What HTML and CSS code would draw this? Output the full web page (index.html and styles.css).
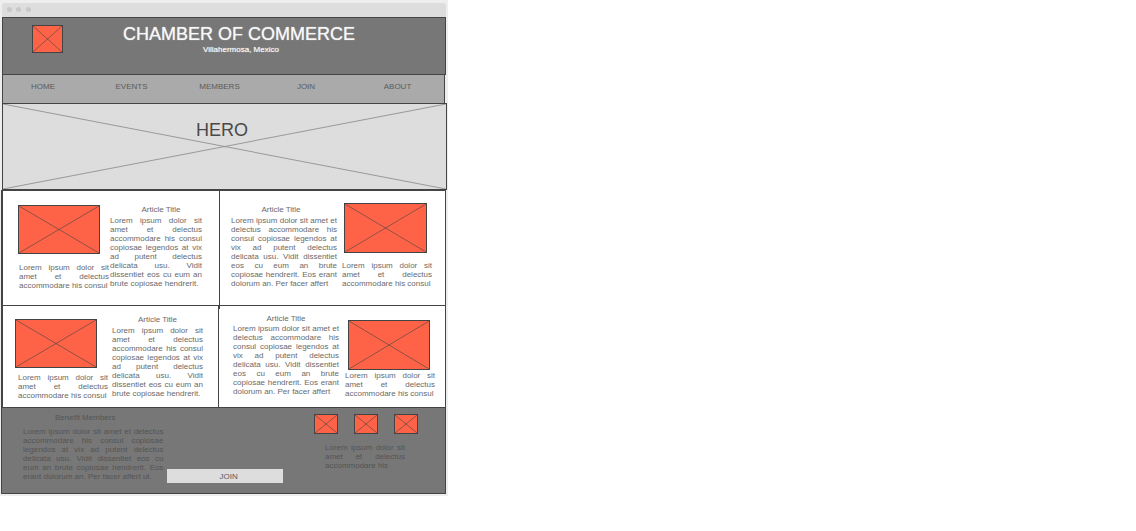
FILE: index.html
```html
<!DOCTYPE html>
<html lang="en">
<head>
<meta charset="utf-8">
<title>Chamber of Commerce</title>
<link rel="stylesheet" href="styles.css">
</head>
<body>
<svg class="defs" aria-hidden="true">
  <symbol id="cross" viewBox="0 0 100 100" preserveAspectRatio="none">
    <path d="M0 0L100 100M0 100L100 0" vector-effect="non-scaling-stroke"/>
  </symbol>
</svg>
<div class="browser">
  <div class="chrome"><span class="dot"></span><span class="dot"></span><span class="dot"></span></div>

  <header class="header">
    <svg class="thumb thumb-logo"><use href="#cross"/></svg>
    <div class="brand">
      <h1 class="brand-name">CHAMBER OF COMMERCE</h1>
      <p class="brand-place">Villahermosa, Mexico</p>
    </div>
  </header>

  <nav class="nav">
    <a href="#home">HOME</a>
    <a href="#events">EVENTS</a>
    <a href="#members">MEMBERS</a>
    <a href="#join">JOIN</a>
    <a href="#about">ABOUT</a>
  </nav>

  <section class="hero">
    <svg class="hero-cross"><use href="#cross"/></svg>
    <h2 class="hero-title">HERO</h2>
  </section>

  <main class="articles">
    <div class="row row-first">
      <article class="article article-a">
        <figure class="figure">
          <svg class="thumb"><use href="#cross"/></svg>
          <figcaption>Lorem ipsum dolor sit amet et delectus accommodare his consul</figcaption>
        </figure>
        <div class="copy">
          <h3>Article Title</h3>
          <p>Lorem ipsum dolor sit amet et delectus accommodare his consul copiosae legendos at vix ad putent delectus delicata usu. Vidit dissentiet eos cu eum an brute copiosae hendrerit.</p>
        </div>
      </article>
      <article class="article article-b">
        <div class="copy">
          <h3>Article Title</h3>
          <p>Lorem ipsum dolor sit amet et delectus accommodare his consul copiosae legendos at vix ad putent delectus delicata usu. Vidit dissentiet eos cu eum an brute copiosae hendrerit. Eos erant dolorum an. Per facer affert</p>
        </div>
        <figure class="figure">
          <svg class="thumb thumb-tall"><use href="#cross"/></svg>
          <figcaption>Lorem ipsum dolor sit amet et delectus accommodare his consul</figcaption>
        </figure>
      </article>
    </div>
    <div class="row row-second">
      <article class="article article-c">
        <figure class="figure">
          <svg class="thumb"><use href="#cross"/></svg>
          <figcaption>Lorem ipsum dolor sit amet et delectus accommodare his consul</figcaption>
        </figure>
        <div class="copy">
          <h3>Article Title</h3>
          <p>Lorem ipsum dolor sit amet et delectus accommodare his consul copiosae legendos at vix ad putent delectus delicata usu. Vidit dissentiet eos cu eum an brute copiosae hendrerit.</p>
        </div>
      </article>
      <article class="article article-d">
        <div class="copy">
          <h3>Article Title</h3>
          <p>Lorem ipsum dolor sit amet et delectus accommodare his consul copiosae legendos at vix ad putent delectus delicata usu. Vidit dissentiet eos cu eum an brute copiosae hendrerit. Eos erant dolorum an. Per facer affert</p>
        </div>
        <figure class="figure">
          <svg class="thumb thumb-tall"><use href="#cross"/></svg>
          <figcaption>Lorem ipsum dolor sit amet et delectus accommodare his consul</figcaption>
        </figure>
      </article>
    </div>
  </main>

  <footer class="footer">
    <section class="benefits">
      <h3>Benefit Members</h3>
      <p>Lorem ipsum dolor sit amet et delectus accommodare his consul copiosae legendos at vix ad putent delectus delicata usu. Vidit dissentiet eos cu eum an brute copiosae hendrerit. Eos erant dolorum an. Per facer affert ut.</p>
    </section>
    <button class="join" type="button">JOIN</button>
    <section class="social">
      <div class="social-icons">
        <svg class="thumb thumb-small"><use href="#cross"/></svg>
        <svg class="thumb thumb-small"><use href="#cross"/></svg>
        <svg class="thumb thumb-small"><use href="#cross"/></svg>
      </div>
      <p>Lorem ipsum dolor sit amet et delectus accommodare his</p>
    </section>
  </footer>
</div>
</body>
</html>
```
FILE: styles.css
```css
* { box-sizing: border-box; }

body {
  margin: 0;
  background: #fff;
  color: #6a6a6a;
  font: 8px/9px "Liberation Sans", Arial, sans-serif;
}

h1, h2, h3, p, figure { margin: 0; font-weight: 400; }
h3 { font-size: 8px; line-height: 9px; text-align: center; }

.defs { position: absolute; width: 0; height: 0; }

.browser {
  width: 100%;
  max-width: 448px;
  padding: 3px 1px 2px;
  background: #eee;
}

.chrome {
  display: flex;
  gap: 4px;
  height: 14px;
  margin: 0 1px;
  padding: 4px 5px;
  background: #ddd;
  border-radius: 2px 2px 0 0;
}
.dot { width: 5px; height: 5px; border-radius: 50%; background: #c8c8c8; }
.dot:last-child { margin-left: 1px; }

/* Crossed placeholder boxes */
.thumb {
  display: block;
  width: 100%;
  height: 49px;
  border: 1px solid #444;
  background: #ff6347;
  fill: none;
  stroke: #444;
  stroke-opacity: .6;
}
.thumb-tall { height: 50px; }
.thumb-logo { flex: none; width: 31px; height: 28px; }
.thumb-small { flex: none; width: 24px; height: 20px; }

.header {
  display: flex;
  margin: 0 1px;
  padding: 7px 30px 20px 29px;
  border: 1px solid #444;
  background: #777;
  color: #f8f8f8;
}
.brand { flex: 1; text-align: center; text-shadow: 0 0 1px #ddd; }
.brand-name { margin-bottom: 2px; font-size: 18px; line-height: 18px; }
.brand-place { padding-left: 4px; }

.nav {
  display: grid;
  grid-template-columns: 80fr 97fr 79fr 94fr 89fr;
  margin: 0 2px 0 1px;
  padding: 7px 2px 12px 0;
  border: solid #444;
  border-width: 0 1px;
  background: #aaa;
  text-align: center;
}
.nav a { color: #5a5a5a; text-decoration: none; }

.hero {
  position: relative;
  margin-left: 1px;
  padding: 15px 5px 48px 0;
  border: 1px solid #444;
  background: #ddd;
  color: #4a4a4a;
  text-align: center;
}
.hero-cross {
  position: absolute;
  inset: 0;
  width: 100%;
  height: 100%;
  fill: none;
  stroke: #999;
}
.hero-title { position: relative; font-size: 18px; line-height: 22px; }

.articles {
  margin-right: 1px;
  border: solid #444;
  border-width: 1px 1px 0 2px;
  background: #fff;
}
.row { display: grid; }
.row-first { grid-template-columns: 217fr 225fr; border-bottom: 1px solid #444; }
.row-second { grid-template-columns: 216fr 226fr; }

.article { display: grid; align-items: start; }
.article-a, .article-c { border-right: 1px solid #444; }
.copy, figcaption, .footer p { text-align: justify; }
.copy h3 { margin-bottom: 2px; }

.article-a { position: relative; grid-template-columns: 92fr 92fr; padding: 14px 17px 15px 15px; }
.article-a .thumb { width: 82px; }
.article-a figcaption { margin: 9px 1px 0; }
.article-a h3 { padding-left: 10px; }

/* Divider running past the bottom of the first row */
.article-a::after {
  content: "";
  position: absolute;
  top: 100%;
  left: 100%;
  width: 1px;
  height: 4px;
  background: #444;
}

.article-b { grid-template-columns: 106fr 90fr; column-gap: 5px; padding: 12px 13px 15px 11px; }
.article-b .copy { padding-top: 2px; }
.article-b .thumb { width: 83px; margin-left: 2px; }
.article-b figcaption { margin-top: 8px; }
.article-b h3 { padding-right: 6px; }

.article-c { grid-template-columns: 93fr 91fr; column-gap: 4px; padding: 9px 15px 7px 12px; }
.article-c .figure { padding-top: 4px; }
.article-c .thumb { width: 82px; }
.article-c figcaption { margin: 5px 0 0 3px; }

.article-d { grid-template-columns: 106fr 90fr; column-gap: 6px; padding: 8px 10px 7px 14px; }
.article-d h3 { margin-bottom: 1px; }
.article-d .figure { padding-top: 6px; }
.article-d .thumb { width: 82px; margin-left: 3px; }
.article-d figcaption { margin-top: 1px; }

.footer {
  display: grid;
  grid-template-columns: 141fr 116fr 130fr;
  column-gap: 4px;
  margin-right: 1px;
  padding: 5px 27px 10px 21px;
  border: 1px solid #444;
  background: #777;
  color: #555;
}
.benefits { padding-bottom: 2px; }
.benefits h3 { margin-bottom: 5px; padding-right: 16px; }

.join {
  align-self: end;
  height: 14px;
  padding: 0 0 0 7px;
  border: 0;
  background: #ddd;
  color: #5a5a5a;
  font: inherit;
}

.social { padding-left: 27px; }
.social-icons { display: flex; gap: 16px; padding-top: 1px; }
.social p { margin: 9px 13px 0 11px; }
```
